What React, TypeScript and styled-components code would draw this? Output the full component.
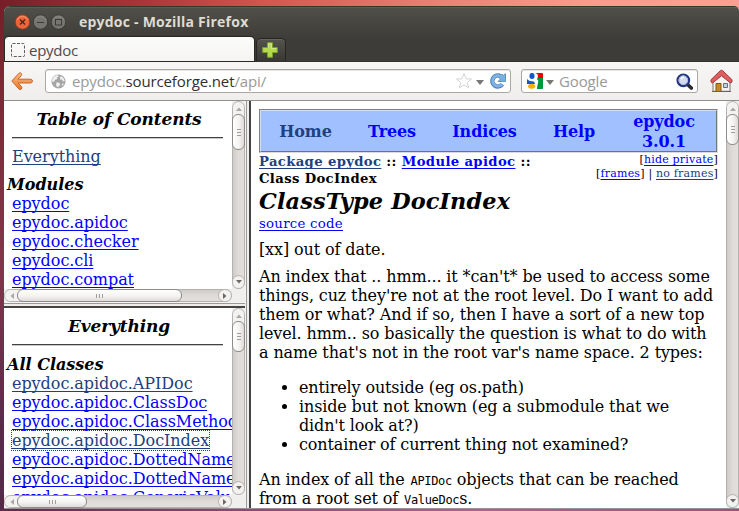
import React from 'react';
import styled, { createGlobalStyle, css } from 'styled-components';

const GlobalStyle = createGlobalStyle`
  html, body { margin: 0; padding: 0; overflow: hidden; }
  *, *::before, *::after { box-sizing: border-box; }
  svg { display: block; flex: none; }
`;

const serif = '"DejaVu Serif", serif';
const ui = '"Open Sans", "Noto Sans", sans-serif';

/* ---------- Desktop and window ---------- */

const Desktop = styled.div`
  width: 739px;
  height: 511px;
  padding: 6px 0 0 4px;
  overflow: hidden;
  background:
    linear-gradient(90deg, #5e2b4c, #8b4d78 35%, #ac6391 65%, #a45079) 0 509px / 739px 2px no-repeat,
    linear-gradient(180deg, transparent 6px, #7c2833 60px, #83364a 260px, #5a2a4b 420px, #542949) 0 6px / 4px 505px no-repeat,
    linear-gradient(90deg, #761e29, #a93238 18%, #d4564f 36%, #e97f73 58%, #fc9b8c 80%, #fd9f92);
`;

const Window = styled.div`
  display: flex;
  flex-direction: column;
  width: 735px;
  height: 503px;
  overflow: hidden;
  border-radius: 6px 5px 0 0;
  border-bottom: 1px solid #979390;
  background: #f1f0ee;
`;

const Chrome = styled.div`
  flex: none;
  height: 56px;
  display: flex;
  flex-direction: column;
  border-top: 1px solid #363530;
  border-bottom: 1px solid #34332f;
  box-shadow: inset 0 1px #5d5b54;
  background: linear-gradient(#504f49, #3d3c38 32px);
`;

const TitleBar = styled.div`
  height: 31px;
  display: flex;
  align-items: center;
  gap: 3px;
  padding-left: 11px;
`;

const Title = styled.div`
  margin-left: 10px;
  font: bold 14px/20px ${ui};
  letter-spacing: 0.23px;
  color: #dfdbd2;
  white-space: nowrap;
`;

const TabStrip = styled.div`
  height: 24px;
  display: flex;
  align-items: flex-end;
  gap: 2px;
  padding-left: 1px;
`;

const ActiveTab = styled.div`
  width: 249px;
  height: 24px;
  display: flex;
  align-items: center;
  gap: 4px;
  padding: 1px 0 0 6px;
  border-radius: 4px 4px 0 0;
  background: linear-gradient(#fcfcfb, #f5f4f3);
  box-shadow: 0 0 1px 1px #282824;
  font: 15px/22px ${ui};
  letter-spacing: -0.25px;
  color: #4c4c4c;
`;

const NewTab = styled.div`
  width: 30px;
  height: 23px;
  display: flex;
  align-items: center;
  justify-content: center;
  border: 1px solid #272622;
  border-bottom: 0;
  border-radius: 5px 5px 0 0;
  background: linear-gradient(#55534d, #383733);
  box-shadow: inset 0 1px #66645d;
  > svg { margin-right: 3px; }
`;

const Toolbar = styled.div`
  flex: none;
  height: 39px;
  display: flex;
  align-items: flex-start;
  padding: 7px 0 0 7px;
  border-bottom: 1px solid #93918f;
  background: linear-gradient(#f7f6f5, #efeeec);
`;

const BackSlot = styled.div`
  padding-top: 2px;
`;

const Field = styled.div<{ $width: number; $ml: number }>`
  width: ${(p) => p.$width}px;
  height: 24px;
  margin-left: ${(p) => p.$ml}px;
  display: flex;
  align-items: center;
  padding: 0 4px 0 5px;
  border: 1px solid #aaa6a1;
  border-radius: 3px;
  background: #fff;
  box-shadow: inset 0 1px #e6e4e2;
  font: 15px/22px ${ui};
  letter-spacing: -0.13px;
  color: #999;
  white-space: nowrap;
`;

const FieldText = styled.span<{ $ml: number }>`
  flex: 1;
  margin-left: ${(p) => p.$ml}px;
  b { font-weight: 400; color: #303030; }
`;

const Caret = styled.i<{ $ml?: number; $mr?: number }>`
  width: 0;
  height: 0;
  margin: 2px ${(p) => p.$mr ?? 0}px 0 ${(p) => p.$ml ?? 0}px;
  border: 4px solid transparent;
  border-top: 5px solid #777673;
  border-bottom: 0;
`;

const HomeSlot = styled.div`
  margin-left: 12px;
`;

/* ---------- Frames ---------- */

const Frames = styled.div`
  flex: 1;
  display: flex;
  min-height: 0;
`;

const SideColumn = styled.div`
  width: 241px;
  display: flex;
  flex-direction: column;
  min-height: 0;
`;

const FrameBox = styled.section<{ $height?: number }>`
  display: grid;
  grid-template-columns: minmax(0, 1fr) 13px;
  grid-template-rows: minmax(0, 1fr) auto;
  ${(p) => (p.$height ? `flex: none; height: ${p.$height}px;` : 'flex: 1 1 0;')}
  min-width: 0;
  min-height: 0;
  background: #f0efed;
`;

const RowSplit = styled.div`
  flex: none;
  height: 6px;
  border-top: 1px solid #f4f3f2;
  border-bottom: 2px solid #454443;
  background: linear-gradient(#9c9a98 1px, #efeeed 1px);
`;

const ColumnSplit = styled.div`
  flex: none;
  width: 6px;
  border-left: 1px solid #f4f3f2;
  border-right: 2px solid #454443;
  background: linear-gradient(90deg, #9c9a98 1px, #efeeed 1px);
`;

const Page = styled.div`
  min-height: 0;
  overflow: hidden;
  background: #fff;
  font: 16px/19px ${serif};
  letter-spacing: -0.12px;
  color: #000;
  white-space: nowrap;
`;

/* ---------- Scrollbars ---------- */

const Bar = styled.div<{ $across?: boolean }>`
  display: flex;
  flex-direction: ${(p) => (p.$across ? 'row' : 'column')};
  ${(p) => (p.$across ? 'height: 13px;' : 'width: 13px;')}
  border: 1px solid #b5b1ae;
  border-radius: 7px;
  background: linear-gradient(${(p) => (p.$across ? '180deg' : '90deg')}, #cfcbc9, #dedbd9 50%, #e2dfdd);
`;

const endCap = css`
  flex: none;
  display: flex;
  align-items: center;
  justify-content: center;
  background: #f3f2f1;
`;

const StartCap = styled.div<{ $across?: boolean }>`
  ${endCap}
  ${(p) => (p.$across ? 'width: 19px; margin-right: -7px; border-radius: 6px 0 0 6px; padding-right: 6px;' : 'height: 19px; margin-bottom: -7px; border-radius: 6px 6px 0 0; padding-bottom: 6px;')}
`;

const EndCap = styled.div<{ $across?: boolean }>`
  ${endCap}
  ${(p) => (p.$across ? 'width: 12px;' : 'height: 12px;')}
  border-radius: 6px;
  box-shadow: 0 0 0 1px #b9b5b2;
`;

const Thumb = styled.div<{ $across?: boolean; $length: number }>`
  flex: none;
  z-index: 1;
  display: flex;
  flex-direction: ${(p) => (p.$across ? 'row' : 'column')};
  align-items: center;
  justify-content: center;
  gap: 2px;
  ${(p) => (p.$across ? `width: ${p.$length}px; height: 13px; margin: -1px 0;` : `height: ${p.$length}px; width: 13px; margin: 0 -1px;`)}
  border: 1px solid #8f8b88;
  border-radius: 6px;
  background: linear-gradient(${(p) => (p.$across ? '180deg' : '90deg')}, #fff, #f4f3f2 55%, #dedbd9);
`;

const Ridge = styled.i<{ $across?: boolean }>`
  width: ${(p) => (p.$across ? 1 : 4)}px;
  height: ${(p) => (p.$across ? 4 : 1)}px;
  background: #a19d9a;
`;

const Space = styled.div`
  flex: 1;
`;

const arrows = {
  up: 'M0 5 3 1.5 6 5Z',
  down: 'M0 1 3 4.5 6 1Z',
  left: 'M5 0 1.5 3 5 6Z',
  right: 'M1 0 4.5 3 1 6Z',
};

function Arrow({ to, dim }: { to: keyof typeof arrows; dim?: boolean }) {
  return (
    <svg width="6" height="6" viewBox="0 0 6 6">
      <path d={arrows[to]} fill={dim ? '#aaa7a4' : '#6a6764'} />
    </svg>
  );
}

function Scrollbar({ across, length }: { across?: boolean; length: number }) {
  return (
    <Bar $across={across}>
      <StartCap $across={across}><Arrow to={across ? 'left' : 'up'} dim /></StartCap>
      <Thumb $across={across} $length={length}>
        <Ridge $across={across} /><Ridge $across={across} /><Ridge $across={across} />
      </Thumb>
      <Space />
      <EndCap $across={across}><Arrow to={across ? 'right' : 'down'} /></EndCap>
    </Bar>
  );
}

/* ---------- Side frame contents ---------- */

const SidePage = styled(Page)`
  letter-spacing: -0.05px;
`;

const SideTitle = styled.h1`
  margin: 8px 0 0 1px;
  width: 228px;
  text-align: center;
  font: italic bold 17px/20px ${serif};
  letter-spacing: -0.13px;
`;

const Rule = styled.hr`
  width: 211px;
  height: 2px;
  margin: 8px 0 8px 8px;
  border: 0;
  border-top: 1px solid #424242;
  border-bottom: 1px solid #c9c9c9;
`;

const GroupTitle = styled.h2`
  margin: 8px 0 0 3px;
  padding-top: 1px;
  height: 20px;
  font: italic bold 16px/20px ${serif};
  letter-spacing: 0;
`;

const Link = styled.a<{ $visited?: boolean; $focus?: boolean }>`
  color: ${(p) => (p.$visited ? '#204080' : '#0000ff')};
  text-decoration: underline;
  text-decoration-thickness: 1px;
  text-underline-offset: 2px;
  text-decoration-skip-ink: none;
  ${(p) => p.$focus && 'outline: 1px dotted #204080;'}
`;

const Entry = styled.div`
  height: 19px;
  margin-left: 8px;
`;

/* ---------- Main frame contents ---------- */

const Document = styled(Page)`
  padding: 8px 8px 0;
`;

const NavOuter = styled.nav`
  width: 459px;
  height: 44px;
  border: 1px solid;
  border-color: #7f8388 #d9dbde #d9dbde #7f8388;
`;

const NavInner = styled.div`
  height: 42px;
  display: grid;
  grid-template-columns: 89px 84px 101px 78px 102px;
  align-items: center;
  padding-top: 1px;
  border: 1px solid;
  border-color: #d3dcee #70757d #70757d #d3dcee;
  background: #a0c0ff;
`;

const NavItem = styled.div<{ $current?: boolean }>`
  height: 40px;
  display: flex;
  align-items: center;
  justify-content: center;
  text-align: center;
  font-weight: bold;
  line-height: 20px;
  color: ${(p) => (p.$current ? '#204080' : '#0000ff')};
`;

const TrailRow = styled.div`
  display: flex;
  justify-content: space-between;
  width: 459px;
  height: 34px;
`;

const Trail = styled.div`
  font: bold 13.2px/17px ${serif};
  letter-spacing: 0.36px;
`;

const Options = styled.div`
  text-align: right;
  font: 11px/14px ${serif};
  letter-spacing: 0.2px;
`;

const Heading = styled.h1`
  margin: 0;
  padding-top: 1px;
  height: 27px;
  font: italic bold 22.4px/27px ${serif};
  letter-spacing: 0.12px;
`;

const Source = styled.div`
  height: 19px;
  font: 13.3px/19px ${serif};
  letter-spacing: 0.26px;
`;

const Paragraph = styled.p`
  margin: 7px 0 8px;
`;

const Bullets = styled.ul`
  margin: 16px 0;
  padding-left: 40px;
  letter-spacing: -0.14px;
  list-style: disc;
`;

const Code = styled.code`
  margin-left: 1px;
  font: 12px/12px "DejaVu Sans Mono", monospace;
  letter-spacing: -0.34px;
`;

/* ---------- Icons ---------- */

function WindowButton({ kind }: { kind: 'close' | 'min' | 'max' }) {
  const close = kind === 'close';
  return (
    <svg width="15" height="16" viewBox="0 0 15 16">
      <circle cx="7.5" cy="8" r="7.2" fill={close ? '#ee6338' : '#77756f'} stroke={close ? '#8f3b22' : '#34332f'} strokeWidth=".7" />
      <path d="M2 6a6 6 0 0 1 11 0" fill="none" stroke={close ? '#f79470' : '#8b8983'} />
      {close && <path d="m5 5.5 5 5m0-5-5 5" stroke="#42261b" strokeWidth="1.3" />}
      {kind === 'min' && <path d="M4 8.5h7" stroke="#3b3a35" strokeWidth="1.1" />}
      {kind === 'max' && <rect x="4.5" y="5.5" width="6" height="5.5" fill="none" stroke="#3b3a35" />}
    </svg>
  );
}

const BackIcon = () => (
  <svg width="22" height="20" viewBox="0 0 22 20">
    <defs><linearGradient id="back" x2="0" y2="1"><stop stopColor="#f9bd80" /><stop offset="1" stopColor="#e9772d" /></linearGradient></defs>
    <path d="M.8 10 8 2.2q1.5-1 2.3.2t-.1 2.3L7 8.2h12.500q2 .2 2 1.9t-2 1.900H7l3.300 3.300q1.300 1.700 0 2.800t-2.400-.1Z" fill="url(#back)" stroke="#c7652c" strokeLinejoin="round" />
  </svg>
);

const GlobeIcon = () => (
  <svg width="15" height="15" viewBox="0 0 15 15">
    <circle cx="7.5" cy="7.5" r="7" fill="#a5a5a5" />
    <path d="M3 2.5 6 1l2 1.2-2 1.2.3 1.5L4 6 2.7 8.3 1 7Q1 4 3 2.5ZM10 2l2.5 2 1.3 3-1.8.5-1-2-1.7.2-.3-2ZM5.5 8.2l2.8.6 1 1.6L7.5 13l-2-.4-.4-2ZM11 9.5l2 .3-2 2.8Z" fill="#eee" />
  </svg>
);

const StarIcon = () => (
  <svg width="16" height="16" viewBox="0 0 16 16">
    <path d="m8 .8 2.2 5 5.2.3-4.1 3.4 1.4 5.4L8 12l-4.7 2.9 1.4-5.4L.6 6.1l5.2-.3Z" fill="#fff" stroke="#d2d1d0" strokeLinejoin="round" />
  </svg>
);

const ReloadIcon = () => (
  <svg width="16" height="16" viewBox="0 0 16 16">
    <path d="M12.3 11.3A5.5 5.5 0 1 1 10.5 3.2" fill="none" stroke="#4d83bd" strokeWidth="4.4" />
    <path d="M15.5.7v7.8H8L10.5 6 9 4.8 12 1.2l1.2 1.2Z" fill="#7bafe0" stroke="#4d83bd" strokeWidth=".8" strokeLinejoin="round" />
    <path d="M12 11.2A5.3 5.3 0 1 1 10.8 3.4" fill="none" stroke="#80b4e3" strokeWidth="2.8" />
  </svg>
);

const GoogleIcon = () => (
  <svg width="16" height="16" viewBox="0 0 16 16">
    <path d="M8 0h7q1 0 1 1v4H10Z" fill="#f00000" />
    <path d="M9 5h7v10q0 1-1 1H9Z" fill="#009939" />
    <path d="M2.500 0H8l2.500 1q1 3-.5 5 2 2 1 4-1 3-1 6H0v-5l5-1-1-2Q0 4 2.500 0Z" fill="#fff" />
    <ellipse cx="5" cy="2.900" rx="2.600" ry="3" fill="#1057c9" />
    <path d="M0 6q2 2.500 7 2.500L8 11H0Z" fill="#1057c9" />
    <path d="M7 6.500 9 9" stroke="#fff" strokeWidth="1.500" />
    <ellipse cx="4.600" cy="13.200" rx="3.600" ry="2.500" fill="#f5ae0a" />
  </svg>
);

const SearchIcon = () => (
  <svg width="17" height="17" viewBox="0 0 17 17">
    <path d="m11 11 4.3 4" stroke="#29292e" strokeWidth="3.6" strokeLinecap="round" />
    <circle cx="7.3" cy="7.3" r="5.8" fill="#e5ecf8" stroke="#26357f" strokeWidth="2.2" />
    <circle cx="7.3" cy="7.3" r="4.3" fill="#d5dced" stroke="#a5b4dc" />
    <path d="M5 6q1-2 3-2" fill="none" stroke="#fff" strokeWidth="1.5" />
  </svg>
);

const HomeIcon = () => (
  <svg width="23" height="24" viewBox="0 0 23 24">
    <path d="M3 12 11.5 5l8.500 7V21.500q0 .8-1 .8H4q-1 0-1-.8Z" fill="#f5f4f2" stroke="#777671" />
    <path d="M11.500 1.200q.6 0 1.300.6L21.800 10.500q.8 1.400-.3 3-.7.8-1.600 0L11.500 6.800 3.100 13.500q-.9.8-1.600 0-1.100-1.600-.3-3L10.200 1.800q.7-.6 1.300-.6Z" fill="#dc5f60" stroke="#ac343b" strokeLinejoin="round" />
    <path d="M6 14.500h5V22.500H6Z" fill="#c98a22" stroke="#85560e" />
    <path d="M13.500 14.500h4v4h-4Z" fill="#bdd2e6" stroke="#6a6f76" />
    <path d="M2 22.500h19" stroke="#666460" />
  </svg>
);

const PlusIcon = () => (
  <svg width="16" height="16" viewBox="0 0 16 16">
    <path d="M5.500 .7h5v4.800h4.800v5h-4.800v4.800h-5v-4.800H.7v-5h4.800Z" fill="#b5d94b" stroke="#76a427" />
    <path d="M6.600 5.800v-4h2.800v4.800h4.800" fill="none" stroke="#dcef9a" strokeWidth=".8" />
  </svg>
);

const BlankPageIcon = () => (
  <svg width="14" height="14" viewBox="0 0 14 14">
    <rect x=".5" y=".5" width="13" height="13" rx="1" fill="none" stroke="#5b5b5b" strokeDasharray="3 1.500" />
  </svg>
);

/* ---------- Data ---------- */

type Item = { name: string; visited?: boolean; focus?: boolean };

const modules: Item[] = ['epydoc', 'epydoc.apidoc', 'epydoc.checker', 'epydoc.cli', 'epydoc.compat'].map((name) => ({ name }));

const classes: Item[] = [
  { name: 'epydoc.apidoc.APIDoc', visited: true },
  { name: 'epydoc.apidoc.ClassDoc' },
  { name: 'epydoc.apidoc.ClassMethodDoc' },
  { name: 'epydoc.apidoc.DocIndex', visited: true, focus: true },
  { name: 'epydoc.apidoc.DottedName' },
  { name: 'epydoc.apidoc.DottedName.Invalid' },
  { name: 'epydoc.apidoc.GenericValueDoc' },
];

function Entries({ items }: { items: Item[] }) {
  return (
    <>
      {items.map((it) => (
        <Entry key={it.name}><Link $visited={it.visited} $focus={it.focus}>{it.name}</Link></Entry>
      ))}
    </>
  );
}

export default function App() {
  return (
    <Desktop>
      <GlobalStyle />
      <Window>
        <Chrome>
          <TitleBar>
            <WindowButton kind="close" />
            <WindowButton kind="min" />
            <WindowButton kind="max" />
            <Title>epydoc - Mozilla Firefox</Title>
          </TitleBar>
          <TabStrip>
            <ActiveTab><BlankPageIcon />epydoc</ActiveTab>
            <NewTab><PlusIcon /></NewTab>
          </TabStrip>
        </Chrome>
        <Toolbar>
          <BackSlot><BackIcon /></BackSlot>
          <Field $width={466} $ml={12}>
            <GlobeIcon />
            <FieldText $ml={6}>epydoc.<b>sourceforge.net</b>/api/</FieldText>
            <StarIcon />
            <Caret $ml={4} $mr={6} />
            <ReloadIcon />
          </Field>
          <Field $width={177} $ml={10}>
            <GoogleIcon />
            <Caret $ml={3} />
            <FieldText $ml={5}>Google</FieldText>
            <SearchIcon />
          </Field>
          <HomeSlot><HomeIcon /></HomeSlot>
        </Toolbar>
        <Frames>
          <SideColumn>
            <FrameBox $height={201}>
              <SidePage>
                <SideTitle>Table of Contents</SideTitle>
                <Rule />
                <Entry><Link $visited>Everything</Link></Entry>
                <GroupTitle>Modules</GroupTitle>
                <Entries items={modules} />
              </SidePage>
              <Scrollbar length={36} />
              <Scrollbar across length={165} />
            </FrameBox>
            <RowSplit />
            <FrameBox>
              <SidePage>
                <SideTitle>Everything</SideTitle>
                <Rule />
                <GroupTitle>All Classes</GroupTitle>
                <Entries items={classes} />
              </SidePage>
              <Scrollbar length={31} />
              <Scrollbar across length={70} />
            </FrameBox>
          </SideColumn>
          <ColumnSplit />
          <FrameBox>
            <Document>
              <NavOuter>
                <NavInner>
                  <NavItem $current>Home</NavItem>
                  <NavItem>Trees</NavItem>
                  <NavItem>Indices</NavItem>
                  <NavItem>Help</NavItem>
                  <NavItem>epydoc<br />3.0.1</NavItem>
                </NavInner>
              </NavOuter>
              <TrailRow>
                <Trail>
                  <Link $visited>Package epydoc</Link> :: <Link>Module apidoc</Link> ::<br />Class DocIndex
                </Trail>
                <Options>
                  [<Link>hide private</Link>]<br />[<Link>frames</Link>] | <Link $visited>no frames</Link>]
                </Options>
              </TrailRow>
              <Heading>ClassType DocIndex</Heading>
              <Source><Link>source code</Link></Source>
              <Paragraph>[xx] out of date.</Paragraph>
              <Paragraph>
                An index that .. hmm... it *can't* be used to access some<br />
                things, cuz they're not at the root level. Do I want to add<br />
                them or what? And if so, then I have a sort of a new top<br />
                level. hmm.. so basically the question is what to do with<br />
                a name that's not in the root var's name space. 2 types:
              </Paragraph>
              <Bullets>
                <li>entirely outside (eg os.path)</li>
                <li>inside but not known (eg a submodule that we<br />didn't look at?)</li>
                <li>container of current thing not examined?</li>
              </Bullets>
              <Paragraph>
                An index of all the <Code>APIDoc</Code> objects that can be reached<br />
                from a root set of <Code>ValueDoc</Code>s.
              </Paragraph>
            </Document>
            <Scrollbar length={31} />
          </FrameBox>
        </Frames>
      </Window>
    </Desktop>
  );
}
